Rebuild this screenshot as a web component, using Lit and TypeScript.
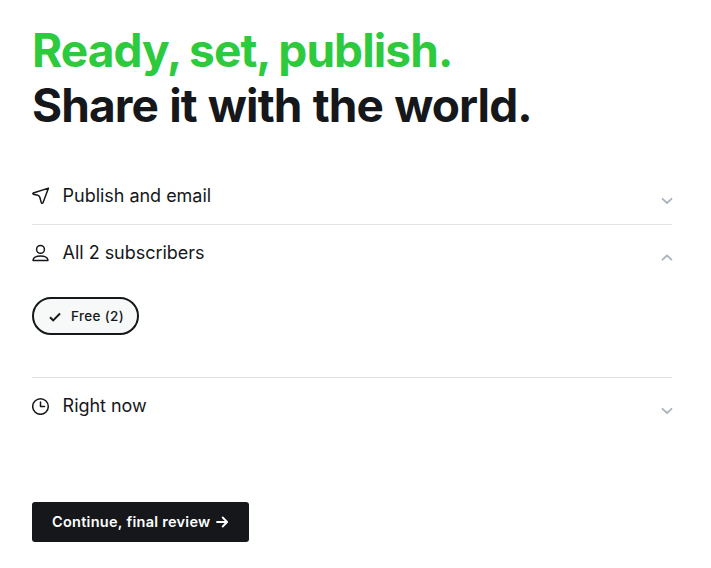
import { LitElement, html, css, svg } from "lit";
import { customElement } from "lit/decorators.js";

const send = svg`<path d="M16.5 1.1 1.3 6c-.6.2-.6 1 0 1.2l4.5 1.1c1.1.3 1.7.9 2 2l1.5 5.3c.2.9 1.4.9 1.7.1Z"/>`;
const person = svg`<circle cx="8.5" cy="5.4" r="3.9"/><path d="M1.1 16.5v-.7c.5-2.7 2.7-3.9 7.4-3.9s6.9 1.2 7.4 3.9v.7Z"/>`;
const clock = svg`<circle cx="8.5" cy="9.5" r="7.8"/><path d="M8.5 5v4.5h4"/>`;

@customElement("app-root")
export class AppRoot extends LitElement {
  static styles = css`
    :host { display: block; box-sizing: border-box; height: 568px; padding: 23px 39px 0 32px; background: #fff; color: #15171a; font-family: Inter, sans-serif; overflow: hidden; }
    h1 { margin: 0; font-size: 46px; line-height: 55px; font-weight: 700; letter-spacing: -0.9px; white-space: nowrap; }
    .green { color: #2cca3c; display: block; word-spacing: -1.1px; }
    .dark { display: block; word-spacing: 1.2px; }
    .options { margin-top: 35px; }
    .option { border-bottom: 1px solid #e1e3e5; }
    .option:last-child { border-bottom: 0; }
    .row { height: 56px; display: flex; align-items: center; }
    .icon { width: 18px; height: 18px; fill: none; stroke: currentColor; stroke-width: 1.5; stroke-linejoin: round; stroke-linecap: round; margin-right: 12.6px; }
    .label { flex: 1; font-size: 18px; line-height: 24px; letter-spacing: -0.03px; }
    .chev { width: 12px; height: 8px; fill: none; stroke: #abb4be; stroke-width: 1.8; stroke-linecap: round; stroke-linejoin: round; margin: 9px -1px 0 0; }
    .body { height: 96px; box-sizing: border-box; padding-top: 16px; }
    .pill { box-sizing: border-box; width: 107px; height: 38px; border: 2px solid #15171a; border-radius: 19px; background: #f7f8f8; display: flex; align-items: center; padding-left: 15px; font-size: 13.5px; line-height: 18px; font-weight: 500; letter-spacing: 0.35px; white-space: nowrap; }
    .pill span { padding-bottom: 1px; }
    .check { width: 12px; height: 10px; fill: none; stroke: currentColor; stroke-width: 2; margin: 2px 10px 0 0; }
    .button { margin-top: 68px; border: 0; border-radius: 3px; width: 217px; height: 40px; padding: 0 0 0 20px; background: #15171a; color: #fff; font: 600 14.5px/18px Inter, sans-serif; letter-spacing: 0.28px; white-space: nowrap; display: flex; align-items: center; }
    .button span { padding-bottom: 1px; }
    .arrow { width: 12px; height: 12px; fill: none; stroke: currentColor; stroke-width: 1.8; stroke-linecap: round; stroke-linejoin: round; margin-left: 5px; }
  `;

  option(icon: unknown, label: string, open: boolean, body: unknown = "") {
    return html`<div class="option">
      <div class="row">
        <svg class="icon" viewBox="0 0 18 18">${icon}</svg>
        <span class="label">${label}</span>
        <svg class="chev" viewBox="0 0 12 8"><path d=${open ? "M1.5 5.7 6 1.5l4.5 4.2" : "M1.5 1.8 6 6l4.5-4.2"} /></svg>
      </div>${body}
    </div>`;
  }

  render() {
    return html`
      <h1><span class="green">Ready, set, publish.</span><span class="dark">Share it with the world.</span></h1>
      <div class="options">
        ${this.option(send, "Publish and email", false)}
        ${this.option(person, "All 2 subscribers", true, html`<div class="body"><div class="pill">
          <svg class="check" viewBox="0 0 12 10"><path d="M1 5.2 4.2 8.4 11 1.5"/></svg><span>Free (2)</span></div></div>`)}
        ${this.option(clock, "Right now", false)}
      </div>
      <button class="button"><span>Continue, final review</span><svg class="arrow" viewBox="0 0 12 12"><path d="M1 6h10M6.7 1.5 11.1 6l-4.4 4.5"/></svg></button>
    `;
  }
}
